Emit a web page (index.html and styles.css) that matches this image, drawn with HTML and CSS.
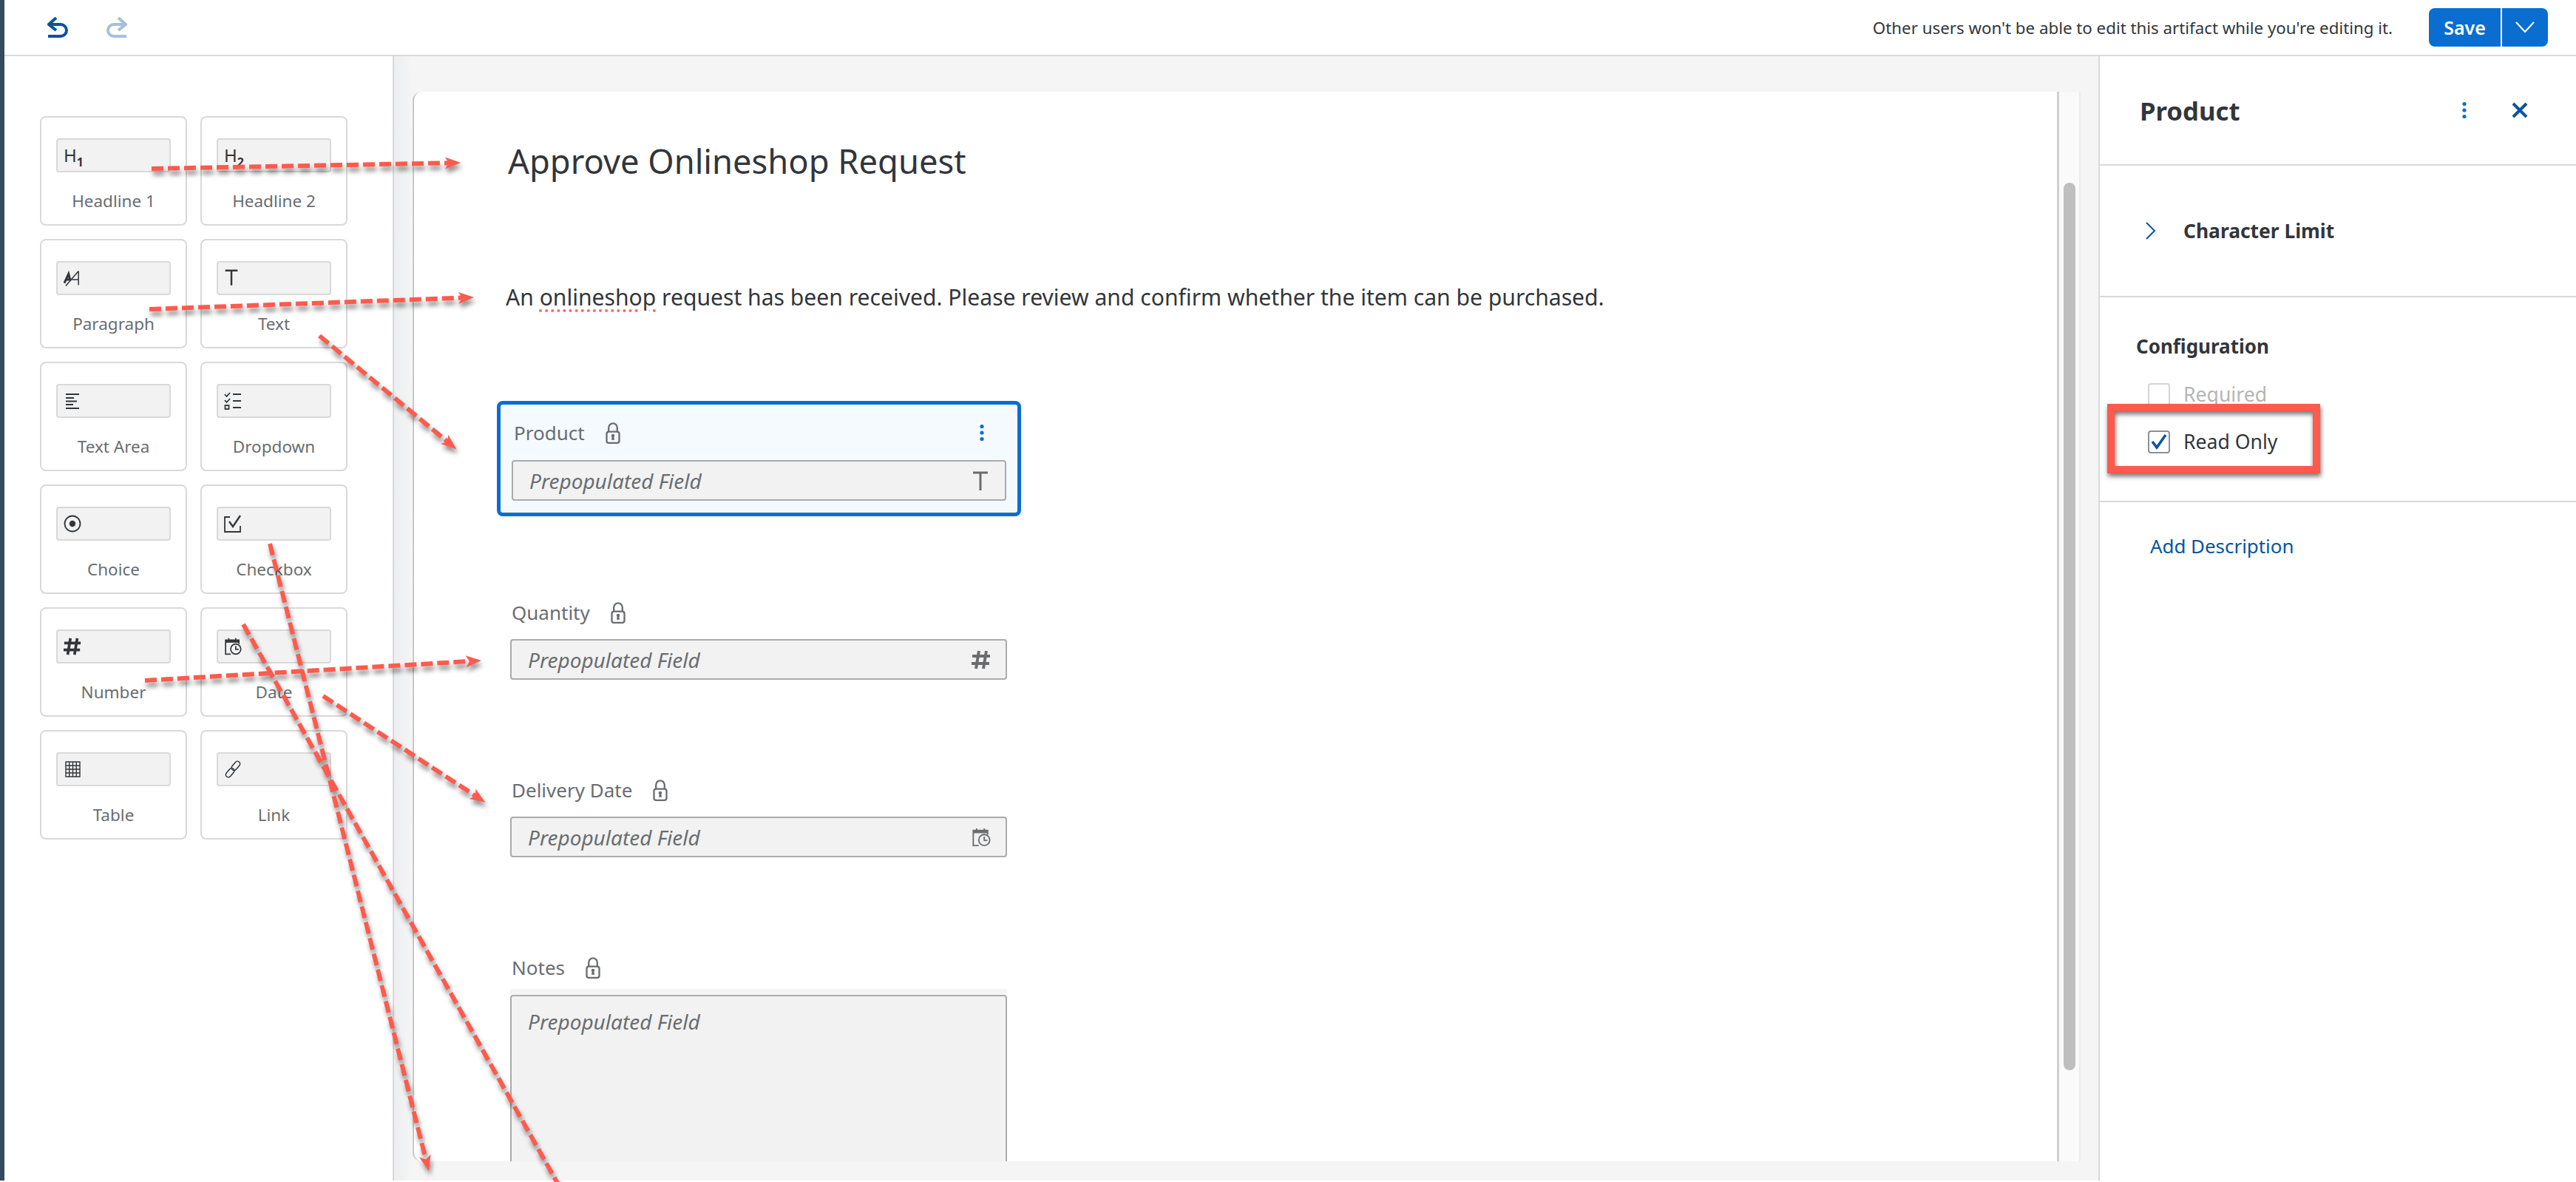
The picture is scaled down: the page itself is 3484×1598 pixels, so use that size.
FILE: index.html
```html
<!DOCTYPE html>
<html lang="en">
<head>
  <meta charset="UTF-8">
  <title>Approve Onlineshop Request</title>
  <link rel="stylesheet" href="styles.css">
</head>
<body>
  <svg class="defs" width="0" height="0">
    <symbol id="i-lock" viewBox="0 0 20 30">
      <path d="M4 13V7.5a6 6 0 0 1 12 0V13" fill="none" stroke="currentColor" stroke-width="2.4"/>
      <rect x="1.2" y="13" width="17.6" height="15.8" rx="3" fill="none" stroke="currentColor" stroke-width="2.4"/>
      <circle cx="10" cy="18.5" r="2.3" fill="currentColor"/>
      <path d="M8.8 20h2.4l1 4.5H7.8z" fill="currentColor"/>
    </symbol>
    <symbol id="i-t" viewBox="0 0 24 26">
      <path d="M2 2h20M12 2v24" fill="none" stroke="currentColor" stroke-width="3"/>
    </symbol>
    <symbol id="i-hash" viewBox="0 0 26 26">
      <path d="M10 1L6 25M20 1l-4 24M1 8h24M0 18h24" fill="none" stroke="currentColor" stroke-width="4"/>
    </symbol>
    <symbol id="i-date" viewBox="0 0 27 28">
      <path d="M10 26H2V4h21v6" fill="none" stroke="currentColor" stroke-width="2"/>
      <path d="M2 4h21v4H2z" fill="currentColor"/>
      <path d="M7 1v4M18 1v4" stroke="currentColor" stroke-width="2"/>
      <circle cx="18" cy="18" r="8" fill="none" stroke="currentColor" stroke-width="2"/>
      <path d="M18 13v5.5h4.5" fill="none" stroke="currentColor" stroke-width="2"/>
    </symbol>
    <symbol id="i-dots" viewBox="0 0 8 24">
      <circle cx="4" cy="3.5" r="2.6" fill="currentColor"/>
      <circle cx="4" cy="12" r="2.6" fill="currentColor"/>
      <circle cx="4" cy="20.5" r="2.6" fill="currentColor"/>
    </symbol>
    <symbol id="i-undo" viewBox="0 0 28 28">
      <path d="M12 1L2 10l10 8M2 10h16a8 8 0 0 1 0 16H1" fill="none" stroke="currentColor" stroke-width="4"/>
    </symbol>
  </svg>

  <div class="app">
    <div class="stripe"></div>
    <div class="main">
      <header class="toolbar">
        <div class="history">
          <svg class="icon-undo"><use href="#i-undo"/></svg>
          <svg class="icon-undo redo"><use href="#i-undo"/></svg>
        </div>
        <span class="lock-note">Other users won't be able to edit this artifact while you're editing it.</span>
        <div class="save-group">
          <button class="save-btn">Save</button>
          <button class="save-arrow">
            <svg width="26" height="16" viewBox="0 0 26 16"><path d="M1 1l12 13L25 1" fill="none" stroke="#fff" stroke-width="2"/></svg>
          </button>
        </div>
      </header>

      <div class="workspace">
        <aside class="palette">
          <div class="card">
            <div class="card-slot"><span class="slot-h">H<sub>1</sub></span></div>
            <span class="card-label">Headline 1</span>
          </div>
          <div class="card">
            <div class="card-slot"><span class="slot-h">H<sub>2</sub></span></div>
            <span class="card-label">Headline 2</span>
          </div>
          <div class="card">
            <div class="card-slot">
              <svg class="slot-icon" viewBox="0 0 25 24"><path d="M1 19L7 6l2 8H4" fill="none" stroke="#32363a" stroke-width="3.2"/><path d="M3 23L21 2M21 2v20M12 14h9" fill="none" stroke="#32363a" stroke-width="1.6"/></svg>
            </div>
            <span class="card-label">Paragraph</span>
          </div>
          <div class="card">
            <div class="card-slot"><svg class="slot-icon slot-t"><use href="#i-t"/></svg></div>
            <span class="card-label">Text</span>
          </div>
          <div class="card">
            <div class="card-slot">
              <svg class="slot-icon" viewBox="0 0 24 24"><path d="M3 3h18M3 8h11M3 12.500h15M3 17h10M3 22h18" fill="none" stroke="#32363a" stroke-width="1.8"/></svg>
            </div>
            <span class="card-label">Text Area</span>
          </div>
          <div class="card">
            <div class="card-slot">
              <svg class="slot-icon" viewBox="0 0 24 24"><path d="M1 3l2.500 3L8 1M1 11l2.500 3L8 9" fill="none" stroke="#32363a" stroke-width="1.800"/><rect x="1.500" y="18" width="5" height="5" fill="none" stroke="#32363a" stroke-width="1.800"/><path d="M12 3h11M12 12h11M12 21h11" fill="none" stroke="#32363a" stroke-width="1.800"/></svg>
            </div>
            <span class="card-label">Dropdown</span>
          </div>
          <div class="card">
            <div class="card-slot">
              <svg class="slot-icon" viewBox="0 0 24 24"><circle cx="12" cy="12" r="10.500" fill="none" stroke="#32363a" stroke-width="1.800"/><circle cx="12" cy="12" r="4.200" fill="#32363a"/></svg>
            </div>
            <span class="card-label">Choice</span>
          </div>
          <div class="card">
            <div class="card-slot">
              <svg class="slot-icon" viewBox="0 0 24 24"><path d="M8 3H1v20h21v-8" fill="none" stroke="#32363a" stroke-width="1.800"/><path d="M7 9l5 7L22 1" fill="none" stroke="#32363a" stroke-width="2.400"/></svg>
            </div>
            <span class="card-label">Checkbox</span>
          </div>
          <div class="card">
            <div class="card-slot"><svg class="slot-icon"><use href="#i-hash"/></svg></div>
            <span class="card-label">Number</span>
          </div>
          <div class="card">
            <div class="card-slot"><svg class="slot-icon"><use href="#i-date"/></svg></div>
            <span class="card-label">Date</span>
          </div>
          <div class="card">
            <div class="card-slot">
              <svg class="slot-icon" viewBox="0 0 24 24"><path d="M3 2h19v20H3zM3 7h19M3 12h19M3 17h19M7.750 2v20M12.500 2v20M17.250 2v20" fill="none" stroke="#32363a" stroke-width="1.400"/></svg>
            </div>
            <span class="card-label">Table</span>
          </div>
          <div class="card">
            <div class="card-slot">
              <svg class="slot-icon" viewBox="0 0 24 24"><g fill="none" stroke="#32363a" stroke-width="1.500" transform="rotate(-50 12 12)"><rect x="-1" y="8.500" width="14" height="7" rx="3.500"/><rect x="11" y="8.500" width="14" height="7" rx="3.500"/></g></svg>
            </div>
            <span class="card-label">Link</span>
          </div>
        </aside>

        <section class="canvas-area">
          <div class="sheet-wrap">
            <div class="sheet">
              <h1 class="form-title">Approve Onlineshop Request</h1>
              <p class="form-text">An <span class="misspelled">onlineshop</span> request has been received. Please review and confirm whether the item can be purchased.</p>

              <div class="field field-selected">
                <div class="field-head">
                  <label class="field-label">Product</label>
                  <svg class="lock"><use href="#i-lock"/></svg>
                  <svg class="field-menu"><use href="#i-dots"/></svg>
                </div>
                <div class="input">
                  <span>Prepopulated Field</span>
                  <svg class="input-icon"><use href="#i-t"/></svg>
                </div>
              </div>

              <div class="field field-quantity">
                <div class="field-head">
                  <label class="field-label">Quantity</label>
                  <svg class="lock"><use href="#i-lock"/></svg>
                </div>
                <div class="input">
                  <span>Prepopulated Field</span>
                  <svg class="input-icon"><use href="#i-hash"/></svg>
                </div>
              </div>

              <div class="field">
                <div class="field-head">
                  <label class="field-label">Delivery Date</label>
                  <svg class="lock"><use href="#i-lock"/></svg>
                </div>
                <div class="input">
                  <span>Prepopulated Field</span>
                  <svg class="input-icon"><use href="#i-date"/></svg>
                </div>
              </div>

              <div class="field">
                <div class="field-head">
                  <label class="field-label">Notes</label>
                  <svg class="lock"><use href="#i-lock"/></svg>
                </div>
                <div class="textarea-band"></div>
                <div class="input input-area"><span>Prepopulated Field</span></div>
              </div>
            </div>
            <div class="scrolltrack"><div class="scrollthumb"></div></div>
          </div>
        </section>

        <aside class="panel">
          <div class="panel-head">
            <h2 class="panel-title">Product</h2>
            <svg class="panel-dots"><use href="#i-dots"/></svg>
            <svg class="panel-close" viewBox="0 0 22 22"><path d="M2 2l18 18M20 2L2 20" fill="none" stroke="#0854a0" stroke-width="4"/></svg>
          </div>
          <div class="panel-limit">
            <svg class="chevron" viewBox="0 0 14 24"><path d="M1 1l11 11L1 23" fill="none" stroke="#0854a0" stroke-width="2"/></svg>
            <span class="limit-text">Character Limit</span>
          </div>
          <div class="panel-config">
            <h3 class="config-title">Configuration</h3>
            <div class="check-row disabled"><span class="check"></span><span>Required</span></div>
            <div class="check-row">
              <span class="check">
                <svg width="24" height="22" viewBox="0 0 24 22"><path d="M3 11l6 8L21 2" fill="none" stroke="#0854a0" stroke-width="3.500"/></svg>
              </span>
              <span>Read Only</span>
            </div>
          </div>
          <a class="add-desc">Add Description</a>
        </aside>
      </div>
    </div>
  </div>

  <!-- annotation arrows drawn over the screenshot -->
  <svg class="annotations" viewBox="0 0 3484 1598">
    <defs>
      <marker id="head" markerUnits="userSpaceOnUse" markerWidth="24" markerHeight="20" refX="5" refY="10" orient="auto">
        <path d="M0 2L21 10 0 18 5 10z" fill="#ff5a4d"/>
      </marker>
    </defs>
    <g class="arrows">
      <path d="M205 228L607 220.300"/>
      <path d="M202 418L625 402.600"/>
      <path d="M432 454L605 597"/>
      <path d="M196 920L635 894"/>
      <path d="M365 735L576 1567.500"/>
      <path class="no-head" d="M329 844L770 1628"/>
      <path d="M437 941L643 1076"/>
    </g>
    <rect class="callout" x="2855" y="551" width="278" height="84"/>
  </svg>
</body>
</html>
```

FILE: styles.css
```css
* {
  box-sizing: border-box;
}

body {
  margin: 0;
  width: 3484px;
  height: 1598px;
  overflow: hidden;
  position: relative;
  background: #fff;
  font-family: "Noto Sans", "Liberation Sans", sans-serif;
  color: #32363a;
}

.defs {
  position: absolute;
}

svg {
  display: block;
}

.app {
  display: flex;
  height: 1596px;
}

.stripe {
  width: 6px;
  background: #354a5f;
}

.main {
  flex: 1;
  display: flex;
  flex-direction: column;
  min-width: 0;
}

/* top bar */
.toolbar {
  height: 76px;
  border-bottom: 2px solid #d9d9d9;
  display: flex;
  align-items: center;
  padding-left: 58px;
  padding-right: 38px;
}

.history {
  display: flex;
  gap: 52px;
  margin-right: auto;
}

.icon-undo {
  width: 28px;
  height: 28px;
  color: #0854a0;
}

.redo {
  color: #a6bfdc;
  transform: scaleX(-1);
}

.lock-note {
  font-size: 22.3px;
  margin-right: 49px;
}

.save-group {
  display: flex;
  gap: 2px;
}

.save-btn,
.save-arrow {
  height: 52px;
  border: 0;
  background: #0a6ed1;
  color: #fff;
  font-family: inherit;
  padding: 0;
}

.save-btn {
  width: 97px;
  font-size: 25px;
  font-weight: 600;
  border-radius: 8px 0 0 8px;
}

.save-arrow {
  width: 62px;
  border-radius: 0 8px 8px 0;
  display: flex;
  align-items: center;
  justify-content: center;
}

.workspace {
  flex: 1;
  display: flex;
  min-height: 0;
}

/* left palette */
.palette {
  width: 527px;
  border-right: 2px solid #d9d9d9;
  padding: 81px 0 0 48px;
  display: grid;
  grid-template-columns: 199px 199px;
  grid-auto-rows: 148px;
  gap: 18px;
  align-content: start;
}

.card {
  border: 2px solid #d9d9d9;
  border-radius: 8px;
  padding: 28px 20px 0;
  display: flex;
  flex-direction: column;
  align-items: center;
}

.card-slot {
  width: 100%;
  height: 46px;
  flex: none;
  background: #f2f2f2;
  border: 2px solid #d9d9d9;
  border-radius: 4px;
  padding-left: 8px;
  display: flex;
  align-items: center;
}

.card-label {
  margin-top: 23px;
  font-size: 22.5px;
  line-height: 32px;
  color: #6a6d70;
}

.slot-icon {
  width: 24px;
  height: 24px;
  color: #32363a;
}

.slot-t {
  width: 20px;
  margin-top: -2px;
}

.slot-h {
  font-size: 24px;
  line-height: 30px;
}

.slot-h sub {
  font-size: 16px;
  font-weight: 700;
  line-height: 0;
}

/* canvas */
.canvas-area {
  flex: 1;
  min-width: 0;
  background: linear-gradient(90deg, #eceef0, #f5f5f5 24px);
  padding: 48px 24px 26px 25px;
}

.sheet-wrap {
  height: 100%;
  display: flex;
  overflow: hidden;
}

.sheet {
  flex: 1;
  min-width: 0;
  background: #fff;
  border-left: 2px solid #c8c8c8;
  border-right: 3px solid #cfcfcf;
  border-top-left-radius: 12px;
  border-bottom-left-radius: 12px;
  padding-left: 130px;
  overflow: hidden;
}

.scrolltrack {
  width: 29px;
  background: #fafafa;
  border-right: 2px solid #ececec;
  padding: 123px 6px 0;
}

.scrollthumb {
  width: 16px;
  height: 1200px;
  background: #bfbfbf;
  border-radius: 8px;
}

.form-title {
  margin: 64px 0 0 -3px;
  font-size: 45.3px;
  line-height: 60px;
  font-weight: 400;
}

.form-text {
  margin: 134px 0 0 -6px;
  font-size: 30.1px;
  line-height: 40px;
}

.misspelled {
  text-decoration: underline dotted #ff6a5e;
  text-decoration-thickness: 4px;
  text-underline-offset: 5px;
}

.field {
  width: 672px;
  margin-top: 133px;
}

.field-head {
  display: flex;
  align-items: center;
  height: 32px;
  padding-left: 2px;
  margin-bottom: 20px;
}

.field-label {
  font-size: 26px;
  line-height: 32px;
  color: #6a6d70;
}

.lock {
  width: 20px;
  height: 29px;
  margin-left: 28px;
  color: #6a6d70;
}

.field-selected {
  width: 709px;
  margin: 120px 0 0 -18px;
  border: 5px solid #0a6ed1;
  border-radius: 8px;
  background: #f5faff;
  padding: 22px 15px 16px;
}

.field-selected .field-head {
  padding-left: 3px;
  margin-bottom: 21px;
}

.field-quantity {
  margin-top: 114px;
}

.field-menu {
  width: 8px;
  height: 24px;
  margin-left: auto;
  margin-right: 29px;
  color: #0a6ed1;
}

.input {
  height: 55px;
  background: #f2f2f2;
  border: 2px solid #ababab;
  border-radius: 4px;
  padding: 0 20px 0 22px;
  display: flex;
  align-items: center;
  justify-content: space-between;
  font-size: 28px;
  line-height: 36px;
  font-style: italic;
  color: #6a6d70;
}

.input-icon {
  width: 26px;
  height: 26px;
  color: #6a6d70;
}

.textarea-band {
  height: 8px;
  margin-top: -7px;
  background: #f5f5f5;
}

.input-area {
  height: 400px;
  align-items: flex-start;
  padding-top: 16px;
}

/* right panel */
.panel {
  width: 646px;
  border-left: 2px solid #d9d9d9;
  display: flex;
  flex-direction: column;
}

.panel-head {
  height: 148px;
  border-bottom: 2px solid #d9d9d9;
  padding-left: 54px;
  display: flex;
  align-items: center;
}

.panel-title {
  margin: 0;
  font-size: 34.7px;
  font-weight: 700;
  margin-right: auto;
}

.panel-dots {
  width: 8px;
  height: 24px;
  color: #0a6ed1;
}

.panel-close {
  width: 22px;
  height: 22px;
  margin-left: 60px;
  margin-right: 65px;
}

.panel-limit {
  height: 178px;
  border-bottom: 2px solid #d9d9d9;
  padding-left: 62px;
  display: flex;
  align-items: center;
}

.chevron {
  width: 14px;
  height: 24px;
}

.limit-text {
  margin-left: 37px;
  font-size: 26.4px;
  font-weight: 700;
}

.panel-config {
  height: 277px;
  border-bottom: 2px solid #d9d9d9;
  padding: 48px 0 0 49px;
}

.config-title {
  margin: 0 0 15px;
  font-size: 26px;
  line-height: 36px;
  font-weight: 700;
}

.check-row {
  display: flex;
  align-items: center;
  height: 64px;
  padding-left: 16px;
  font-size: 26.6px;
  margin-top: 0;
}

.check-row.disabled {
  color: #b5b5b5;
}

.check {
  width: 30px;
  height: 31px;
  border: 2px solid #89919a;
  border-radius: 4px;
  margin-right: 18px;
  display: flex;
  align-items: center;
  justify-content: center;
}

.disabled .check {
  border-color: #d5d5d5;
}

.add-desc {
  margin: 41px 0 0 68px;
  font-size: 25.9px;
  line-height: 36px;
  color: #0854a0;
}

/* annotation layer */
.annotations {
  position: absolute;
  left: 0;
  top: 0;
  width: 3484px;
  height: 1598px;
  pointer-events: none;
}

.arrows {
  filter: drop-shadow(2px 6px 3px rgba(0, 0, 0, 0.45));
}

.arrows path {
  fill: none;
  stroke: #ff5a4d;
  stroke-width: 6;
  stroke-dasharray: 16 6;
  marker-end: url(#head);
}

.arrows .no-head {
  marker-end: none;
}

.callout {
  fill: none;
  stroke: #ff5a4d;
  stroke-width: 10;
  filter: drop-shadow(1px 4px 3px rgba(0, 0, 0, 0.55));
}
```
